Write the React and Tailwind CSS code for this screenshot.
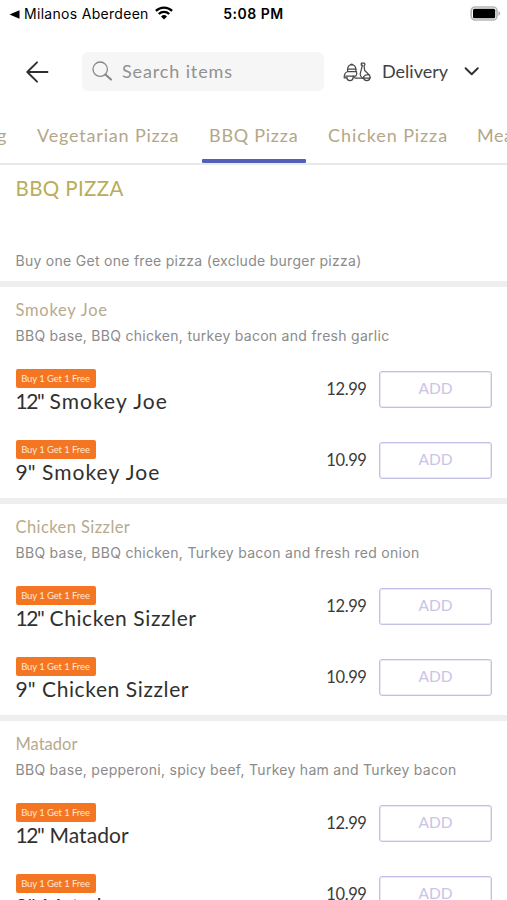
const GROUPS = [
  {
    name: 'Smokey Joe',
    desc: 'BBQ base, BBQ chicken, turkey bacon and fresh garlic',
    labelTracking: 'tracking-[0.75px]',
    itemTracking: 'tracking-[1.05px]',
  },
  {
    name: 'Chicken Sizzler',
    desc: 'BBQ base, BBQ chicken, Turkey bacon and fresh red onion',
    labelTracking: 'tracking-[0.42px]',
    itemTracking: 'tracking-[0.6px]',
  },
  {
    name: 'Matador',
    desc: 'BBQ base, pepperoni, spicy beef, Turkey ham and Turkey bacon',
    labelTracking: 'tracking-[0px]',
    itemTracking: 'tracking-[0.05px]',
  },
];

const SIZES = [
  { size: '12"', price: '12.99', sizeWidth: 'w-[34px] tracking-[-1.4px]' },
  { size: '9"', price: '10.99', sizeWidth: 'w-[26.5px]' },
];

function StatusBar() {
  return (
    <div className="grid h-[28px] shrink-0 grid-cols-[1fr_auto_1fr] items-center px-[9px] font-['Inter',sans-serif] text-black">
      <div className="flex items-center whitespace-nowrap text-[14px] leading-[28px]">
        <svg width="11" height="9" viewBox="0 0 11 9" className="mr-[4px]">
          <path d="M10.5 0.3v8.4L0.5 4.5z" fill="#000" />
        </svg>
        <span className="tracking-[0.3px]">Milanos Aberdeen</span>
        <svg width="18" height="14" viewBox="0 0 18 14" className="ml-[6px] -mt-[2px]">
          <g fill="none" stroke="#000" strokeWidth="2.3">
            <path d="M0.9 4.9a11.6 11.6 0 0 1 16.2 0" />
            <path d="M3.8 8a7.4 7.4 0 0 1 10.4 0" />
          </g>
          <path d="M9 13.5l-3-3a4.3 4.3 0 0 1 6 0z" fill="#000" />
        </svg>
      </div>
      <div className="-mt-[2px] text-[14px] font-semibold tracking-[0.5px]">5:08 PM</div>
      <svg width="31" height="15" viewBox="0 0 31 15" className="-mr-[3px] -mt-[2px] justify-self-end">
        <rect x="1.2" y="1" width="25.8" height="13" rx="4" fill="#fff" stroke="#b5b5b5" strokeWidth="1.7" />
        <rect x="3" y="2.8" width="22.2" height="9.4" rx="1.5" fill="#000" />
        <path d="M28.5 5v4.8q1.7-.6 1.7-2.4T28.5 5z" fill="#aaa" />
      </svg>
    </div>
  );
}

function Scooter() {
  return (
    <svg width="28" height="20" viewBox="0 0 28 20" fill="none" stroke="#484848" strokeWidth="1.25" strokeLinecap="round" strokeLinejoin="round">
      <path d="M4.6 9.2V7.1Q5 3 8.7 2.7Q12.4 3 12.9 7.1V9.2" />
      <path d="M7.9 2.5q.8-1 1.6 0M4.6 7.2h8.3" />
      <path d="M3.6 15.8H1.2Q0.8 10.2 5.4 9.5h8q1 2.6-.6 4.6H10" />
      <path d="M3.9 15.4a3.1 3.1 0 1 0 6.2 0" />
      <path d="M2.6 14.1H10q.8 1.9 2.5 1.9h8" />
      <path d="M18.3 1.2h3q1.4 1.4-.3 2.6l.7 4.7 4.5 4.4q1.2 1.3.8 3.1h-6.4M18.3 1.2v2h1.1l-2.2 8.7Q17 14 19.4 16" />
      <path d="M20.7 15.6a3.1 3.1 0 1 0 6.2 0M20.4 15q1.8-2.8 5.6-2.2" />
    </svg>
  );
}

function Header() {
  return (
    <div className="flex h-[87px] shrink-0 items-center pl-[26px] text-[18px]">
      <svg width="23" height="22" viewBox="0 0 23 22" fill="none" stroke="#2e2e2e" strokeWidth="1.9" strokeLinecap="round" strokeLinejoin="round">
        <path d="M21.5 11H1.5M11 1.3L1.3 11l9.7 9.7" />
      </svg>
      <div className="ml-[33px] flex h-[39px] w-[242px] items-center rounded-[6px] bg-[#f6f6f6] pl-[10px] text-[#919191]">
        <svg width="21" height="21" viewBox="0 0 21 21" fill="none" stroke="#868686">
          <circle cx="8.2" cy="8.2" r="7.2" strokeWidth="1.3" />
          <path d="M13.4 13.4l5.6 5.2" strokeWidth="2" strokeLinecap="round" />
        </svg>
        <span className="-mt-px ml-[9px] whitespace-nowrap tracking-[0.87px]">Search items</span>
      </div>
      <div className="ml-[19px] flex items-center">
        <Scooter />
        <span className="-mt-px ml-[11px] w-[68px] whitespace-nowrap text-[#414141]">Delivery</span>
        <svg width="16" height="9" viewBox="0 0 16 9" fill="none" stroke="#303030" strokeWidth="1.9" strokeLinecap="round" strokeLinejoin="round" className="ml-[14px]">
          <path d="M1.6 1.2l6.1 6 6.1-6" />
        </svg>
      </div>
    </div>
  );
}

function Tabs() {
  return (
    <div className="flex h-[50px] shrink-0 overflow-hidden whitespace-nowrap border-b-2 border-[#e8e9ea] text-[18px] leading-[40px] text-[#b4a788]">
      <div className="flex w-[37px] shrink-0 justify-start">
        <span className="-ml-[3px]">g</span>
      </div>
      <div className="w-[165px] shrink-0 tracking-[0.82px]">Vegetarian Pizza</div>
      <div className="flex h-[48px] w-[104px] shrink-0 flex-col justify-between">
        <div className="pl-[7px] tracking-[0.75px]">BBQ Pizza</div>
        <div className="h-[4px] rounded-[1px] bg-[#5460b5]" />
      </div>
      <div className="w-[171px] shrink-0 pl-[22px] tracking-[0.92px]">Chicken Pizza</div>
      <div className="shrink-0 tracking-[0.5px]">Meat Pizza</div>
    </div>
  );
}

function Item({ name, size, price, sizeWidth, tracking }) {
  return (
    <div className="flex h-[71px] items-start pt-[16px]">
      <div className="flex-1">
        <div className="flex h-[19px] w-[80px] items-center justify-center whitespace-nowrap rounded-[2px] bg-[#f47623] pt-px text-[9.5px] tracking-[-0.1px] text-[#ffe8d7]">
          Buy 1 Get 1 Free
        </div>
        <div className="flex whitespace-nowrap text-[21px] leading-[26px] text-[#303030]">
          <span className={sizeWidth}>{size}</span>
          <span className={tracking}>{name}</span>
        </div>
      </div>
      <div className="mt-[2px] mr-[12.5px] text-[16.5px] leading-[36px] tracking-[-0.4px] text-[#3b3b3b]">{price}</div>
      <button className="mt-[2px] h-[37px] w-[113px] rounded-[3px] border border-[#c0c1e4] pb-px text-[15.5px] text-[#c7c5e6] shadow-[inset_0_0_0_1px_#e9e9f6]">
        ADD
      </button>
    </div>
  );
}

function Group({ name, desc, labelTracking, itemTracking }) {
  return (
    <section className="h-[217px] shrink-0 border-t-[6px] border-[#eeeeee] pr-[15px] pl-[15.5px]">
      <div className="pt-[11px] text-[16.5px] leading-[24px] text-[#b8aa8c]">
        <span className={labelTracking}>{name}</span>
      </div>
      <div className="h-[31px] whitespace-nowrap pt-[4px] font-['Inter',sans-serif] text-[14px] leading-[20px] tracking-[0.28px] text-[#8b8b8b]">{desc}</div>
      {SIZES.map((s) => (
        <Item key={s.size} name={name} tracking={itemTracking} {...s} />
      ))}
    </section>
  );
}

export default function App() {
  return (
    <div className="flex h-[900px] w-[507px] flex-col overflow-hidden bg-white font-['Lato',sans-serif]">
      <StatusBar />
      <Header />
      <Tabs />
      <div className="flex h-[116px] shrink-0 flex-col justify-between px-[15.5px] pt-[10px] pb-[10px]">
        <h1 className="text-[20.5px] leading-[26px] tracking-[0.4px] text-[#b9ad5b]">BBQ PIZZA</h1>
        <p className="whitespace-nowrap font-['Inter',sans-serif] text-[14px] leading-[20px] tracking-[0.28px] text-[#8b8b8b]">
          Buy one Get one free pizza (exclude burger pizza)
        </p>
      </div>
      {GROUPS.map((g) => (
        <Group key={g.name} {...g} />
      ))}
    </div>
  );
}
